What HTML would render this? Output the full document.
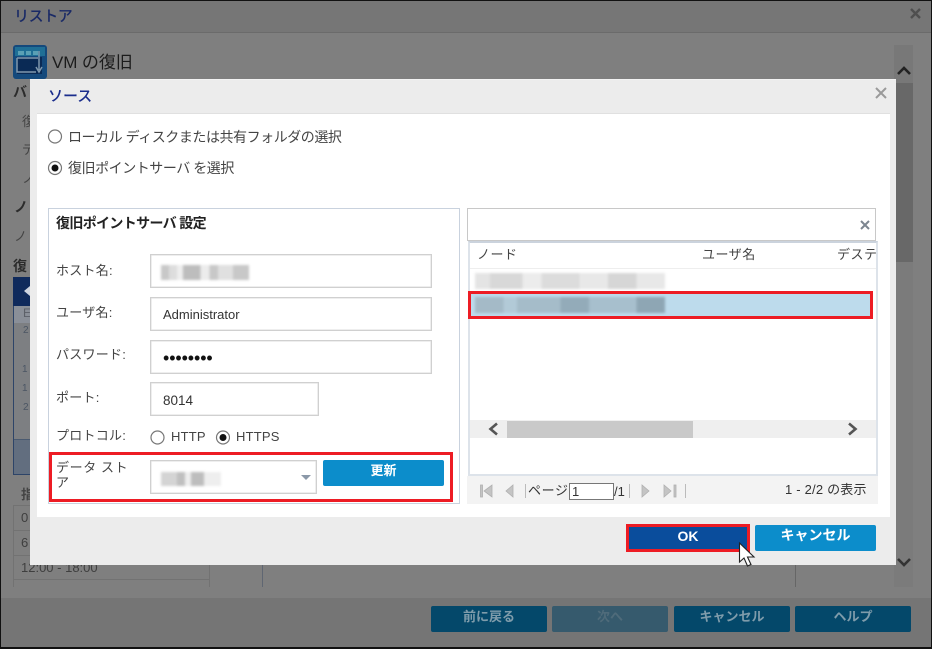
<!DOCTYPE html>
<html lang="ja"><head><meta charset="utf-8"><title>リストア</title>
<style>
html,body{margin:0;padding:0;width:932px;height:649px;overflow:hidden;background:#7f7f7f}
body{position:relative;font-family:"Liberation Sans","Noto Sans CJK JP",sans-serif;font-size:13px;color:#333;filter:blur(.3px)}
.a,.a *{box-sizing:border-box}
.a{position:absolute;white-space:nowrap}
.inp{background:#fff;border:1px solid #d0d0d0;box-shadow:inset 0 0 0 .5px #ddd;font-size:13px;color:#333;line-height:33px;padding-left:12px}
.lbl{font-size:13px;color:#444;line-height:18px;letter-spacing:.25px}
.big{font-size:14px;color:#444;line-height:18px;letter-spacing:-.45px}
.btn{background:#0c8dcb;color:#fff;font-weight:bold;font-size:13px;text-align:center;border-radius:2px}
.dbtn{background:#04486a;color:#6f8f9f;font-weight:bold;font-size:13px;text-align:center;border-radius:2px;line-height:22px;height:26px;top:606px;width:116px}
.red{border:3px solid #ed1c24}
.bl{filter:blur(1.2px)}
.bg{color:#2c2c2c}
.hd{font-size:13px;color:#444;line-height:18px;letter-spacing:.5px}
</style></head><body>
<!-- dimmed backdrop -->
<div class="a" style="left:0;top:0;width:932px;height:33px;background:#767676;border-bottom:1px solid #6b6b6b"></div>
<div class="a" style="left:14px;top:8px;font-size:15px;font-weight:500;color:#1a2a66;line-height:18px;letter-spacing:-.4px">リストア</div>
<svg class="a" style="left:908px;top:6px" width="15" height="15"><path d="M3 3L12 12M12 3L3 12" stroke="#4f4f4f" stroke-width="2.400"/></svg>
<svg class="a" style="left:13px;top:45px" width="34" height="34" viewBox="0 0 34 34"><rect width="34" height="34" rx="3" fill="#14497c"/><rect x="2" y="2" width="30" height="9" fill="#1f6f96"/><rect x="4" y="12" width="25" height="17" fill="#0a2a55"/><rect x="5" y="6" width="6" height="4" fill="#5aa0b5"/><rect x="13" y="6" width="5" height="4" fill="#5aa0b5"/><rect x="20" y="6" width="5" height="4" fill="#5aa0b5"/><path d="M4 13H25M4 13V27H23M26 6V25M23 22L26 27L29 22" stroke="#7f98ad" stroke-width="1.500" fill="none"/></svg>
<div class="a" style="left:52px;top:52px;font-size:17px;line-height:22px;color:#1c1c1c;letter-spacing:-.1px">VM の復旧</div>
<div class="a bg" style="left:13px;top:82px;font-size:14px;font-weight:bold">バ</div>
<div class="a bg" style="left:22px;top:111px;font-size:13px;color:#444">復</div>
<div class="a bg" style="left:22px;top:139px;font-size:13px;color:#444">デ</div>
<div class="a bg" style="left:22px;top:168px;font-size:13px;color:#444">ノ</div>
<div class="a bg" style="left:14px;top:197px;font-size:14px;font-weight:bold">ノ</div>
<div class="a bg" style="left:14px;top:226px;font-size:13px;color:#444">ノ</div>
<div class="a bg" style="left:13px;top:256px;font-size:14px;font-weight:bold">復</div>
<div class="a" style="left:13px;top:277px;width:20px;height:198px;background:#7d7f82;border:1px solid #2d4468"></div>
<div class="a" style="left:13px;top:277px;width:20px;height:29px;background:#0f2a5c"></div>
<div class="a" style="left:24px;top:286px;width:0;height:0;border:5px solid transparent;border-right:6px solid #cfd5e0;border-left:0"></div>
<div class="a" style="left:14px;top:306px;width:19px;height:17px;background:#8a8f98;color:#5c6068;font-size:12px;padding-left:9px">E</div>
<div class="a" style="left:14px;top:439px;width:19px;height:35px;background:#626e7f;border-top:1px solid #4a5a70"></div>
<div class="a" style="left:23px;top:325px;font-size:10px;color:#4b5563">2</div>
<div class="a" style="left:22px;top:364px;font-size:10px;color:#4b5563">1</div>
<div class="a" style="left:22px;top:383px;font-size:10px;color:#4b5563">1</div>
<div class="a" style="left:23px;top:402px;font-size:10px;color:#4b5563">2</div>
<div class="a" style="left:21px;top:484px;font-size:13px;font-weight:bold;color:#444">指</div>
<div class="a" style="left:13px;top:505px;width:197px;height:82px;border:1px solid #727272;border-bottom:0"></div>
<div class="a" style="left:14px;top:530px;width:196px;height:1px;background:#727272"></div>
<div class="a" style="left:14px;top:555px;width:196px;height:1px;background:#727272"></div>
<div class="a" style="left:14px;top:579px;width:196px;height:1px;background:#727272"></div>
<div class="a" style="left:21px;top:510px;font-size:13px;color:#3f3f3f;line-height:16px">0</div>
<div class="a" style="left:21px;top:535px;font-size:13px;color:#3f3f3f;line-height:16px">6</div>
<div class="a" style="left:21px;top:560px;font-size:13px;color:#3f3f3f;line-height:16px">12:00 - 18:00</div>
<div class="a" style="left:262px;top:565px;width:1px;height:22px;background:#5f6672"></div>
<div class="a" style="left:795px;top:565px;width:1px;height:22px;background:#666"></div>
<div class="a" style="left:894px;top:45px;width:19px;height:217px;background:#686868"></div>
<div class="a" style="left:894px;top:45px;width:19px;height:38px;background:#787878"></div>
<div class="a" style="left:894px;top:262px;width:19px;height:325px;background:#7b7b7b"></div>
<svg class="a" style="left:894px;top:60px" width="20" height="20"><path d="M4 14L10 8L16 14" stroke="#222" stroke-width="2.600" fill="none"/></svg>
<svg class="a" style="left:894px;top:552px" width="20" height="20"><path d="M4 7L10 13L16 7" stroke="#333" stroke-width="2.600" fill="none"/></svg>
<div class="a" style="left:0;top:598px;width:932px;height:51px;background:#757575"></div>
<div class="a dbtn" style="left:431px;color:#7f9cab">前に戻る</div>
<div class="a dbtn" style="left:552px;background:#365a6d;color:#4f6b7a">次へ</div>
<div class="a dbtn" style="left:674px;color:#7f9cab">キャンセル</div>
<div class="a dbtn" style="left:795px;color:#7f9cab">ヘルプ</div>
<div class="a" style="left:0;top:0;width:932px;height:649px;border:1px solid #111;border-width:1px 1px 2px 1px"></div>

<!-- modal -->
<div class="a" style="left:30px;top:79px;width:866px;height:486px;background:#ececec;border-top:1px solid #f3f3f3"></div>
<div class="a" style="left:48px;top:87px;font-size:15px;font-weight:500;color:#1a2d8c;line-height:20px">ソース</div>
<svg class="a" style="left:873px;top:85px" width="16" height="16"><path d="M3 3L13 13M13 3L3 13" stroke="#9a9a9a" stroke-width="2"/></svg>
<div class="a" style="left:37px;top:113px;width:853px;height:404px;background:#fff;border-top:1px solid #e0e0e0"></div>

<svg class="a" style="left:47px;top:128px" width="16" height="48"><circle cx="8" cy="8.500" r="6.500" fill="#fff" stroke="#777" stroke-width="1.200"/><circle cx="8" cy="40" r="6.500" fill="#fff" stroke="#777" stroke-width="1.200"/><circle cx="8" cy="40" r="3.500" fill="#111"/></svg>
<div class="a big" style="left:68px;top:128px">ローカル ディスクまたは共有フォルダの選択</div>
<div class="a big" style="left:68px;top:159px">復旧ポイントサーバ を選択</div>

<!-- left panel -->
<div class="a" style="left:48px;top:208px;width:412px;height:296px;border:1px solid #c9d2de;background:#fff"></div>
<div class="a" style="left:56px;top:214px;font-size:14px;font-weight:bold;color:#222;line-height:18px;letter-spacing:-.65px">復旧ポイントサーバ 設定</div>
<div class="a lbl" style="left:56px;top:262px">ホスト名:</div>
<div class="a inp" style="left:150px;top:254px;width:282px;height:34px"></div>
<div class="a bl" style="left:161px;top:265px;width:88px;height:15px;background:linear-gradient(90deg,#c8c8c8 0 9%,#ddd 9% 18%,#eee 18% 25%,#bdbdbd 25% 45%,#ececec 45% 55%,#c8c8c8 55% 65%,#e0e0e0 65% 82%,#c8c8c8 82%)"></div>
<div class="a lbl" style="left:56px;top:304px">ユーザ名:</div>
<div class="a inp" style="left:150px;top:297px;width:282px;height:34px;line-height:34px">Administrator</div>
<div class="a lbl" style="left:56px;top:346px">パスワード:</div>
<div class="a inp" style="left:150px;top:340px;width:282px;height:34px;font-size:18px;letter-spacing:-.1px;line-height:34px;color:#111">••••••••</div>
<div class="a lbl" style="left:56px;top:389px">ポート:</div>
<div class="a inp" style="left:150px;top:382px;width:169px;height:34px;line-height:35px;font-size:13.500px">8014</div>
<div class="a lbl" style="left:56px;top:427px">プロトコル:</div>
<svg class="a" style="left:150px;top:430px" width="80" height="16"><circle cx="7.500" cy="7.500" r="6.500" fill="#fff" stroke="#777" stroke-width="1.200"/><circle cx="73" cy="7.500" r="6.500" fill="#fff" stroke="#777" stroke-width="1.200"/><circle cx="73" cy="7.500" r="3.500" fill="#111"/></svg>
<div class="a" style="left:171px;top:428px;font-size:13px;line-height:18px;color:#444;letter-spacing:.2px">HTTP</div>
<div class="a" style="left:236px;top:428px;font-size:13px;line-height:18px;color:#444;letter-spacing:.2px">HTTPS</div>
<div class="a red" style="left:49px;top:452px;width:404px;height:50px"></div>
<div class="a lbl" style="left:56px;top:460px;line-height:15px;white-space:normal;width:80px;letter-spacing:.6px">データ スト<br>ア</div>
<div class="a inp" style="left:150px;top:460px;width:167px;height:34px"></div>
<div class="a bl" style="left:161px;top:472px;width:60px;height:14px;background:linear-gradient(90deg,#d4d4d4 0 27%,#bfbfbf 27% 40%,#eee 40% 50%,#bdbdbd 50% 72%,#eee 72%)"></div>
<div class="a" style="left:301px;top:475px;width:0;height:0;border:5px solid transparent;border-top:5px solid #8b98a8;border-bottom:0"></div>
<div class="a btn" style="left:323px;top:460px;width:121px;height:26px;line-height:22px">更新</div>

<!-- right panel -->
<div class="a" style="left:467px;top:208px;width:409px;height:33px;border:1px solid #c8c8c8;background:#fff"></div>
<svg class="a" style="left:858px;top:218px" width="14" height="14"><path d="M3 3L11 11M11 3L3 11" stroke="#7c8590" stroke-width="2"/></svg>
<div class="a" style="left:468px;top:241px;width:410px;height:235px;border:2px solid #dde3ea;border-top:2px solid #cbd3dd;background:#fff;overflow:hidden"></div>
<div class="a" style="left:470px;top:268px;width:406px;height:1px;background:#eee"></div>
<div class="a hd" style="left:477px;top:246px">ノード</div>
<div class="a hd" style="left:702px;top:246px">ユーザ名</div>
<div class="a hd" style="left:837px;top:246px;width:39px;overflow:hidden">デスティネーション</div>
<div class="a bl" style="left:475px;top:273px;width:190px;height:16px;background:linear-gradient(90deg,#e4e4e4 0 8%,#d8d8d8 8% 25%,#ececec 25% 35%,#dcdcdc 35% 55%,#e8e8e8 55% 70%,#d6d6d6 70% 85%,#e8e8e8 85%)"></div>
<div class="a" style="left:470px;top:293px;width:402px;height:24px;background:#bddbec"></div>
<div class="a red" style="left:468px;top:291px;width:405px;height:28px"></div>
<div class="a bl" style="left:475px;top:297px;width:190px;height:16px;background:linear-gradient(90deg,#a4bac7 0 15%,#b2cad7 15% 22%,#a5bcc9 22% 45%,#93abb9 45% 60%,#a7bfcd 60% 85%,#8ea6b4 85%)"></div>
<div class="a" style="left:470px;top:420px;width:406px;height:18px;background:#efefef"></div>
<div class="a" style="left:507px;top:421px;width:186px;height:17px;background:#c9c9c9"></div>
<svg class="a" style="left:484px;top:421px" width="16" height="16"><path d="M13 2.500L6.500 8L13 13.500" stroke="#555" stroke-width="2.600" fill="none"/></svg>
<svg class="a" style="left:844px;top:421px" width="16" height="16"><path d="M5 2.500L11.500 8L5 13.500" stroke="#555" stroke-width="2.600" fill="none"/></svg>
<div class="a" style="left:467px;top:476px;width:411px;height:28px;background:#f3f3f3"></div>
<svg class="a" style="left:478px;top:482px" width="210" height="18"><g fill="#c4c4c4" stroke="#b0b0b0" stroke-width=".8"><rect x="2.500" y="3" width="2" height="12"/><path d="M14 3V15L6 9Z"/><path d="M35 3V15L28 9Z"/><path d="M164 3V15L171 9Z"/><path d="M186 3V15L193 9Z"/><rect x="196" y="3" width="2" height="12"/></g><path d="M47.500 2V16M151.500 2V16M207.500 2V16" stroke="#bbb"/></svg>
<div class="a" style="left:528px;top:482px;font-size:13px;color:#333;line-height:17px;letter-spacing:.6px">ページ</div>
<div class="a" style="left:569px;top:483px;width:45px;height:17px;border:1px solid #777;background:#fff;font-size:13px;line-height:16px;padding-left:2px">1</div>
<div class="a" style="left:614px;top:483px;font-size:13px;line-height:17px">/1</div>
<div class="a" style="left:785px;top:481px;font-size:13px;color:#333;line-height:18px;letter-spacing:.2px">1 - 2/2 の表示</div>

<!-- buttons -->
<div class="a" style="left:626px;top:524px;width:124px;height:28px;border:3px solid #ed1c24;background:#0a4d9c;color:#fff;font-weight:bold;font-size:14px;text-align:center;line-height:19px">OK</div>
<div class="a btn" style="left:755px;top:525px;width:121px;height:26px;line-height:20px;font-size:14px">キャンセル</div>
<svg class="a" style="left:737px;top:541px" width="20" height="28" viewBox="0 0 20 28"><path d="M2.500 2V21L7 17L10.500 25L14 23.500L10.500 16H17Z" fill="#fff" stroke="#222" stroke-width="1.100"/></svg>
</body></html>
